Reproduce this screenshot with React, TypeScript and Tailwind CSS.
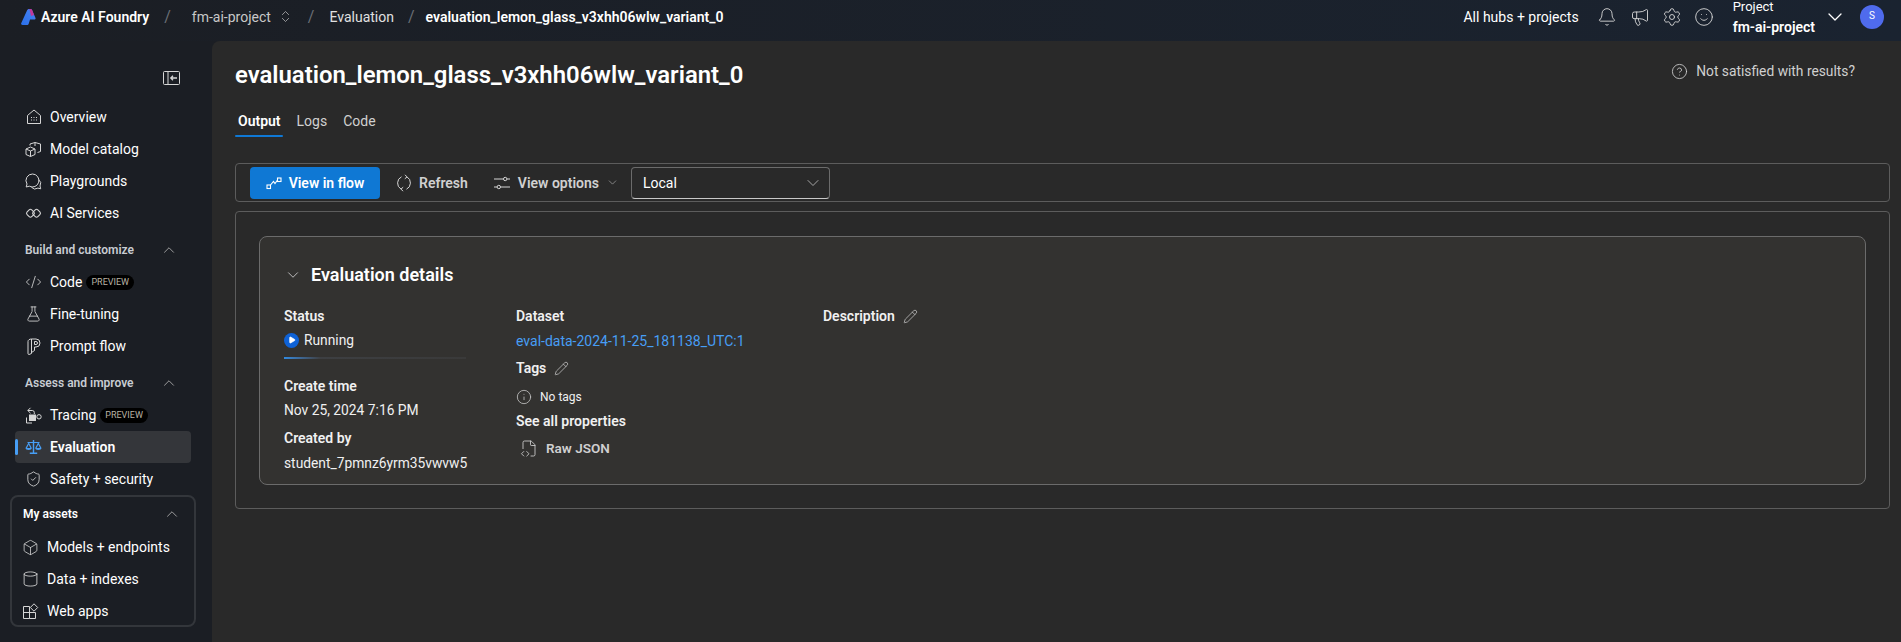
import {
  Bell,
  Box,
  ChevronDown,
  ChevronUp,
  ChevronsUpDown,
  CircleHelp,
  CodeXml,
  Cylinder,
  FileCode2,
  FlaskConical,
  Info,
  Megaphone,
  Pencil,
  Play,
  Settings,
  ShieldCheck,
  Smile,
} from "lucide-react";
import type { ReactNode } from "react";

const iconClass = "w-[17px] h-[17px] text-[#d6d6d6]";
const lucideClass = "w-[18px] h-[18px] text-[#d6d6d6]";

function HomeIcon() {
  return (
    <svg viewBox="0 0 16 16" className="w-4 h-4 text-[#d6d6d6]" fill="none" stroke="currentColor" strokeWidth="1">
      <path d="M1.500 6.500 8 1l6.500 5.500v8h-13z" />
      <path d="M5 8.500h1M7.500 8.500h1M10 8.500h1M5 11h1M7.500 11h1M10 11h1" />
    </svg>
  );
}

function CatalogIcon() {
  return (
    <svg viewBox="0 0 17 17" className={iconClass} fill="none" stroke="currentColor" strokeWidth="1">
      <path d="M1 8 5.500 6l4.500 2v5.500L5.500 15.500 1 13.500z" />
      <path d="M1 8l4.500 2L10 8M5.500 10v5.500" />
      <path d="M5 4.500V3l5-1.500L15.500 3v7.500l-3 1M10 1.500V5" />
    </svg>
  );
}

function BubblesIcon() {
  return (
    <svg viewBox="0 0 17 17" className={iconClass} fill="none" stroke="currentColor" strokeWidth="1">
      <path d="M7.500 1a6.500 6.500 0 1 1-3.200 12.200L1.200 14 2 11A6.500 6.500 0 0 1 7.500 1z" />
      <path d="M13.500 6.500a5 5 0 0 1 1.500 6.500l.7 2.800-2.800-.7a5 5 0 0 1-6.400-.8" />
    </svg>
  );
}

function LinksIcon() {
  return (
    <svg viewBox="0 0 17 17" className={iconClass} fill="none" stroke="currentColor" strokeWidth="1.100">
      <rect x="2.200" y="5" width="6.500" height="6.500" rx="1.800" transform="rotate(45 5.450 8.250)" />
      <rect x="8.300" y="5" width="6.500" height="6.500" rx="1.800" transform="rotate(45 11.550 8.250)" />
    </svg>
  );
}

function PromptFlowIcon() {
  return (
    <svg viewBox="0 0 17 17" className={iconClass} fill="none" stroke="currentColor" strokeWidth="1">
      <path d="M3 3.500C3 2 4.500 1 6.500 1v14.500L4 16.500c-.6 0-1-.4-1-1z" />
      <path d="M6.500 1H11a4 4 0 0 1 0 8H9.500v3.500l-3 2" />
      <path d="M9.500 3.500H11a1.500 1.500 0 0 1 0 3H9.500z" />
    </svg>
  );
}

function TracingIcon() {
  return (
    <svg viewBox="0 0 17 17" className={iconClass} fill="none" stroke="currentColor" strokeWidth="1">
      <path d="M5.500.8 2.800 3.500l2.700 2.700M2.800 3.500h4.500a2 2 0 0 1 2 2V7" />
      <circle cx="14" cy="9.800" r="2.200" />
      <rect x="4.500" y="8" width="6" height="5.500" fill="currentColor" />
      <path d="M1.500 10.500v5.500h5.500" />
    </svg>
  );
}

function ScaleIcon() {
  return (
    <svg viewBox="0 0 17 17" className="w-[18px] h-[18px] text-[#479ef5]" fill="currentColor">
      <path d="M7.800 1.500h1.400v2h5.300v1H9.200v9.500h3v1.500H4.800V14h3V4.500H2.500v-1h5.300z" />
      <path d="M3.300 4.500h.8l2.700 5c0 1.200-1.300 2-3.100 2S.5 10.700.5 9.500zm.4 1.500-1.700 3.500h3.400z" />
      <path d="M12.900 4.500h.8l2.800 5c0 1.200-1.300 2-3.200 2s-3.100-.8-3.100-2zm.4 1.500-1.700 3.500H15z" />
    </svg>
  );
}

function WebAppsIcon() {
  return (
    <svg viewBox="0 0 17 17" className={iconClass} fill="none" stroke="currentColor" strokeWidth="1">
      <path d="M1.500 3.500h6v12h-6zM1.500 9.500h12v6h-6" />
      <path d="m12 .8 3.700 3.700L12 8.200 8.300 4.500z" />
    </svg>
  );
}

function SidebarToggleIcon() {
  return (
    <svg viewBox="0 0 17 14" className="w-[17px] h-[14px] text-[#d6d6d6]" fill="none" stroke="currentColor" strokeWidth="1">
      <rect x=".5" y=".5" width="16" height="13" rx="1" />
      <path d="M5 .5v13" />
      <path d="M14 7H8M10 4.800 7.800 7l2.200 2.200" strokeWidth="1.300" />
    </svg>
  );
}

function FlowIcon() {
  return (
    <svg viewBox="0 0 16 16" className="w-4 h-4 text-white" fill="none" stroke="currentColor" strokeWidth="1.100">
      <rect x="1" y="10" width="3.500" height="3.500" />
      <rect x="11.500" y="3" width="3.500" height="3.500" />
      <path d="M4.500 10 7.500 6.500 9 8.500 11.500 5" />
    </svg>
  );
}

function RefreshIcon() {
  return (
    <svg viewBox="0 0 18 18" className="w-[18px] h-[18px] text-[#d6d6d6]" fill="none" stroke="currentColor" strokeWidth="1">
      <path d="M6.500 2.800a7 7 0 0 0-.5 12.300" />
      <path d="M11.500 15.200A7 7 0 0 0 12 2.900" />
      <path d="M10 .8 12 2.900 9.800 4.800M8 17.200 6 15.100l2.200-1.900" />
    </svg>
  );
}

function OptionsIcon() {
  return (
    <svg viewBox="0 0 18 16" className="w-[18px] h-4 text-[#d6d6d6]" fill="none" stroke="currentColor" strokeWidth="1">
      <path d="M1 4h9.500M14 4h3M1 12h3M7.500 12H17" />
      <circle cx="12.200" cy="4" r="1.700" />
      <circle cx="5.800" cy="12" r="1.700" />
    </svg>
  );
}

function Logo() {
  return (
    <svg viewBox="0 0 15 16" className="w-[15px] h-4">
      <defs>
        <linearGradient id="logoBlue" x1="0" y1="1" x2="1" y2="0">
          <stop offset="0" stopColor="#2a6fe8" />
          <stop offset=".7" stopColor="#3f7df0" />
          <stop offset="1" stopColor="#7a4fe0" />
        </linearGradient>
      </defs>
      <path d="M6 1.500C6.300.6 7 0 8 0h1.500c1 0 1.500.6 1.800 1.500L14.500 9c.3 1-.3 1.500-1.200 1.500H9L7.800 14.500c-.3 1-1 1.500-2 1.500H1.500C.4 16-.2 15.200.2 14.200z" fill="url(#logoBlue)" />
      <path d="M8.500 0h1c1 0 1.500.6 1.800 1.500L13 6 10 7z" fill="#c2379a" />
    </svg>
  );
}

function NavItem({ icon, label, preview, active }: { icon: ReactNode; label: string; preview?: boolean; active?: boolean }) {
  return (
    <div className={`relative flex items-center h-8 pl-[10px] ml-[15px] mr-[21px] rounded gap-2 text-sm text-white ${active ? "bg-[#34363a] font-semibold" : ""}`}>
      {active && <span className="absolute left-0 top-2 h-4 w-[3px] rounded bg-[#479ef5]" />}
      <span className="w-[17px] flex justify-center shrink-0">{icon}</span>
      <span>{label}</span>
      {preview && (
        <span className="-ml-1 rounded-full bg-black px-[5px] py-px text-[9px] leading-[13px] text-[#b8b2a4]">PREVIEW</span>
      )}
    </div>
  );
}

function SectionTitle({ label }: { label: string }) {
  return (
    <div className="flex items-center justify-between h-[37px] pt-[5px] pl-[25px] pr-[34px] text-xs font-semibold text-[#c8ccd2]">
      <span>{label}</span>
      <ChevronUp className="w-[18px] h-[18px] text-[#a8a8a8]" strokeWidth={1.200} />
    </div>
  );
}

function AssetItem({ icon, label }: { icon: ReactNode; label: string }) {
  return (
    <div className="flex items-center h-8 pl-[11px] gap-2 text-sm text-white">
      <span className="w-[17px] flex justify-center shrink-0">{icon}</span>
      <span>{label}</span>
    </div>
  );
}

function Sidebar() {
  return (
    <aside className="w-[212px] shrink-0 bg-[#1b1e24]">
      <div className="flex justify-end pt-[30px] pr-[32px] h-[60px]">
        <SidebarToggleIcon />
      </div>
      <NavItem icon={<HomeIcon />} label="Overview" />
      <NavItem icon={<CatalogIcon />} label="Model catalog" />
      <NavItem icon={<BubblesIcon />} label="Playgrounds" />
      <NavItem icon={<LinksIcon />} label="AI Services" />
      <SectionTitle label="Build and customize" />
      <NavItem icon={<CodeXml className={lucideClass} strokeWidth={1.200} />} label="Code" preview />
      <NavItem icon={<FlaskConical className={lucideClass} strokeWidth={1.200} />} label="Fine-tuning" />
      <NavItem icon={<PromptFlowIcon />} label="Prompt flow" />
      <SectionTitle label="Assess and improve" />
      <NavItem icon={<TracingIcon />} label="Tracing" preview />
      <NavItem icon={<ScaleIcon />} label="Evaluation" active />
      <NavItem icon={<ShieldCheck className={lucideClass} strokeWidth={1.200} />} label="Safety + security" />
      <div className="ml-[10px] mr-[16px] h-[132px] rounded-lg border-2 border-[#33363b]">
        <div className="flex items-center justify-between h-[34px] pl-[11px] pr-[13px] text-xs font-semibold text-white">
          <span>My assets</span>
          <ChevronUp className="w-[18px] h-[18px] text-[#a8a8a8]" strokeWidth={1.200} />
        </div>
        <div className="-ml-[1px]">
          <AssetItem icon={<Box className="w-[19px] h-[19px] text-[#d6d6d6]" strokeWidth={1.100} />} label="Models + endpoints" />
          <AssetItem icon={<Cylinder className={lucideClass} strokeWidth={1.200} />} label="Data + indexes" />
          <AssetItem icon={<WebAppsIcon />} label="Web apps" />
        </div>
      </div>
    </aside>
  );
}

function TopBar() {
  return (
    <header className="flex items-center h-[41px] pb-2 pl-[21px] pr-[17px] bg-gradient-to-r from-[#1b1e24] to-[#1a2330] text-white text-sm">
      <Logo />
      <span className="ml-[5px] font-semibold">Azure AI Foundry</span>
      <span className="ml-[15px] text-[#6a6e75] text-base">/</span>
      <span className="ml-[21px] text-[#c8c8c8]">fm-ai-project</span>
      <ChevronsUpDown className="ml-[7px] w-[15px] h-[15px] text-[#c8c8c8]" strokeWidth={1.100} />
      <span className="ml-[15px] text-[#6a6e75] text-base">/</span>
      <span className="ml-[15px] text-[#e0e0e0]">Evaluation</span>
      <span className="ml-[14px] text-[#6a6e75] text-base">/</span>
      <span className="ml-[11px] font-semibold">evaluation_lemon_glass_v3xhh06wlw_variant_0</span>
      <span className="ml-auto">All hubs + projects</span>
      <Bell className="ml-[18px] w-5 h-5 text-[#d6d6d6]" strokeWidth={1.100} />
      <Megaphone className="ml-[13px] w-5 h-5 text-[#d6d6d6]" strokeWidth={1.100} />
      <Settings className="ml-3 w-5 h-5 text-[#d6d6d6]" strokeWidth={1.100} />
      <Smile className="ml-3 w-5 h-5 text-[#d6d6d6]" strokeWidth={1.100} />
      <div className="ml-[19px] flex flex-col leading-5">
        <span className="text-[13px]">Project</span>
        <span className="font-semibold">fm-ai-project</span>
      </div>
      <ChevronDown className="ml-2 w-6 h-6" strokeWidth={1.300} />
      <span className="ml-[13px] flex items-center justify-center w-6 h-6 rounded-full bg-[#4f6bed] text-[10px]">S</span>
    </header>
  );
}

function Label({ children }: { children: ReactNode }) {
  return <div className="text-sm font-semibold leading-5 text-[#f0f0f0]">{children}</div>;
}

function EvaluationDetails() {
  return (
    <section className="h-[249px] rounded-lg border border-[#6b6b6b] bg-[#333230] pl-6">
      <div className="flex items-center h-[76px] gap-[9px]">
        <ChevronDown className="w-[18px] h-[18px] text-[#c8c8c8]" strokeWidth={1.200} />
        <h2 className="text-lg font-semibold text-white">Evaluation details</h2>
      </div>
      <div className="flex text-[13.8px] text-[#f0f0f0]">
        <div className="w-[232px] -mt-[7px]">
          <Label>Status</Label>
          <div className="flex items-center gap-[5px] mt-[4px] h-5">
            <span className="flex items-center justify-center w-[15px] h-[15px] rounded-full bg-[#0f62d6]">
              <Play className="w-2 h-2 fill-white text-white" />
            </span>
            Running
          </div>
          <div className="mt-[7px] h-[2px] w-[182px] bg-gradient-to-r from-[#2f8ae0] via-[#3d3f42] via-20% to-[#3a3a3a]" />
          <div className="mt-[17px]"><Label>Create time</Label></div>
          <div className="mt-1 leading-5">Nov 25, 2024 7:16 PM</div>
          <div className="mt-2"><Label>Created by</Label></div>
          <div className="mt-[5px] leading-5">student_7pmnz6yrm35vwvw5</div>
        </div>
        <div className="w-[307px] -mt-[7px]">
          <Label>Dataset</Label>
          <div className="mt-[5px] text-sm leading-5 text-[#479ef5]">eval-data-2024-11-25_181138_UTC:1</div>
          <div className="mt-[7px] flex items-center gap-2">
            <Label>Tags</Label>
            <Pencil className="w-[15px] h-[15px] text-[#c8c8c8]" strokeWidth={1.200} />
          </div>
          <div className="mt-[9px] flex items-center gap-2 text-xs h-5">
            <Info className="w-4 h-4 text-[#c8c8c8]" strokeWidth={1.200} />
            No tags
          </div>
          <div className="mt-[4px]"><Label>See all properties</Label></div>
          <div className="mt-[7px] flex items-center gap-2 pl-1 h-5 text-[13.5px] font-semibold text-[#d0d0d0]">
            <FileCode2 className="w-[18px] h-[19px] text-[#d6d6d6]" strokeWidth={1.100} />
            Raw JSON
          </div>
        </div>
        <div className="-mt-[7px] flex items-start gap-2">
          <Label>Description</Label>
          <Pencil className="mt-[3px] w-[15px] h-[15px] text-[#c8c8c8]" strokeWidth={1.200} />
        </div>
      </div>
    </section>
  );
}

function Toolbar() {
  return (
    <div className="flex items-center h-[39px] rounded border border-[#5c5c5c] pl-[14px] text-sm">
      <button className="flex items-center justify-center gap-[7px] w-[130px] h-8 rounded bg-[#0f78d4] font-semibold text-white">
        <FlowIcon />
        View in flow
      </button>
      <div className="flex items-center ml-[15px] gap-[6px] font-semibold text-[#d0d0d0]">
        <RefreshIcon />
        Refresh
      </div>
      <div className="flex items-center ml-[25px] gap-[7px] font-semibold text-[#d0d0d0]">
        <OptionsIcon />
        View options
        <ChevronDown className="w-[13px] h-[13px] text-[#b0b0b0]" strokeWidth={1.200} />
      </div>
      <div className="flex items-center justify-between ml-[12px] w-[199px] h-8 rounded border border-[#6b6b6b] border-b-[#c8c8c8] pl-[11px] pr-[6px] text-white">
        Local
        <ChevronDown className="w-5 h-5 text-[#b0b0b0]" strokeWidth={1.100} />
      </div>
    </div>
  );
}

export default function App() {
  return (
    <div className="flex flex-col h-[642px] overflow-hidden bg-[#1b1e24] [font-family:Roboto,sans-serif]">
      <TopBar />
      <div className="flex flex-1 min-h-0">
        <Sidebar />
        <main className="flex-1 rounded-tl-lg bg-[#292929] pl-[23px] pr-[11px]">
          <div className="flex items-start justify-between h-[69px]">
            <h1 className="mt-[18px] text-[23.9px] leading-8 font-semibold text-white">evaluation_lemon_glass_v3xhh06wlw_variant_0</h1>
            <div className="mt-[20px] flex items-center gap-[8px] pr-[35px] text-[13.8px] text-[#d0d0d0]">
              <CircleHelp className="w-[17px] h-[17px]" strokeWidth={1.200} />
              Not satisfied with results?
            </div>
          </div>
          <nav className="flex items-start h-[53px] gap-[16px] pl-[3px] text-sm text-[#d0d0d0]">
            <div className="relative h-[27px] pt-[1px] font-semibold text-white">
              Output
              <span className="absolute -left-[3px] -right-[2px] bottom-0 h-[2px] rounded bg-[#0f78d4]" />
            </div>
            <div className="pt-[1px]">Logs</div>
            <div className="pt-[1px]">Code</div>
          </nav>
          <Toolbar />
          <div className="mt-[9px] h-[298px] rounded border border-[#5c5c5c] px-[23px] pt-6">
            <EvaluationDetails />
          </div>
        </main>
      </div>
    </div>
  );
}
